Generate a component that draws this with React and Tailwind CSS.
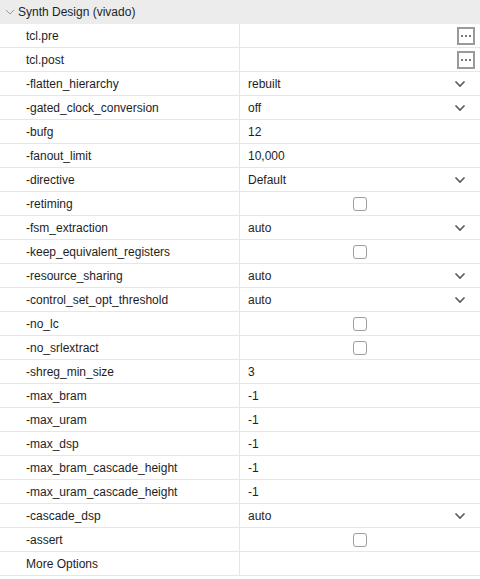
const rows = [
  { label: "tcl.pre", type: "browse" },
  { label: "tcl.post", type: "browse" },
  { label: "-flatten_hierarchy", type: "select", value: "rebuilt" },
  { label: "-gated_clock_conversion", type: "select", value: "off" },
  { label: "-bufg", type: "text", value: "12" },
  { label: "-fanout_limit", type: "text", value: "10,000" },
  { label: "-directive", type: "select", value: "Default" },
  { label: "-retiming", type: "check" },
  { label: "-fsm_extraction", type: "select", value: "auto" },
  { label: "-keep_equivalent_registers", type: "check" },
  { label: "-resource_sharing", type: "select", value: "auto" },
  { label: "-control_set_opt_threshold", type: "select", value: "auto" },
  { label: "-no_lc", type: "check" },
  { label: "-no_srlextract", type: "check" },
  { label: "-shreg_min_size", type: "text", value: "3" },
  { label: "-max_bram", type: "text", value: "-1" },
  { label: "-max_uram", type: "text", value: "-1" },
  { label: "-max_dsp", type: "text", value: "-1" },
  { label: "-max_bram_cascade_height", type: "text", value: "-1" },
  { label: "-max_uram_cascade_height", type: "text", value: "-1" },
  { label: "-cascade_dsp", type: "select", value: "auto" },
  { label: "-assert", type: "check" },
  { label: "More Options", type: "none" },
];

function Chevron() {
  return (
    <svg width="12" height="8" viewBox="0 0 12 8" className="shrink-0">
      <path d="M1.5 1.5 L6 6 L10.5 1.5" fill="none" stroke="#5a5a5a" strokeWidth="1.6" />
    </svg>
  );
}

function ValueCell({ row }) {
  if (row.type === "browse") {
    return (
      <div className="flex h-full items-center justify-end pr-[5px]">
        <div className="flex h-[18px] w-[18px] items-center justify-center gap-[2px] border-2 border-[#9a9a9a] bg-white">
          <span className="h-[2px] w-[2px] bg-[#777]" />
          <span className="h-[2px] w-[2px] bg-[#777]" />
          <span className="h-[2px] w-[2px] bg-[#777]" />
        </div>
      </div>
    );
  }
  if (row.type === "select") {
    return (
      <div className="flex h-full items-center justify-between pl-[8px] pr-[14px]">
        <span>{row.value}</span>
        <Chevron />
      </div>
    );
  }
  if (row.type === "text") {
    return <div className="flex h-full items-center pl-[8px]">{row.value}</div>;
  }
  if (row.type === "check") {
    return (
      <div className="flex h-full items-center justify-center">
        <div className="h-[14px] w-[14px] rounded-[3px] border border-[#9e9e9e] bg-white" />
      </div>
    );
  }
  return null;
}

export default function App() {
  return (
    <div className="w-[480px] h-[579px] bg-white text-[12px] text-[#1e1e1e] font-['Liberation_Sans',Arial,sans-serif]">
      <div className="flex h-[24px] items-center bg-[#ececec] pl-[5px]">
        <svg width="10" height="8" viewBox="0 0 10 8" className="mr-[3px]">
          <path d="M1 2 L5 6 L9 2" fill="none" stroke="#9a9a9a" strokeWidth="1" />
        </svg>
        <span>Synth Design (vivado)</span>
      </div>
      {rows.map((row) => (
        <div key={row.label} className="flex h-[24px] border-b border-[#e6e6e6]">
          <div className="flex w-[240px] items-center border-r border-[#e6e6e6] pl-[26px]">
            {row.label}
          </div>
          <div className="flex-1">
            <ValueCell row={row} />
          </div>
        </div>
      ))}
    </div>
  );
}
